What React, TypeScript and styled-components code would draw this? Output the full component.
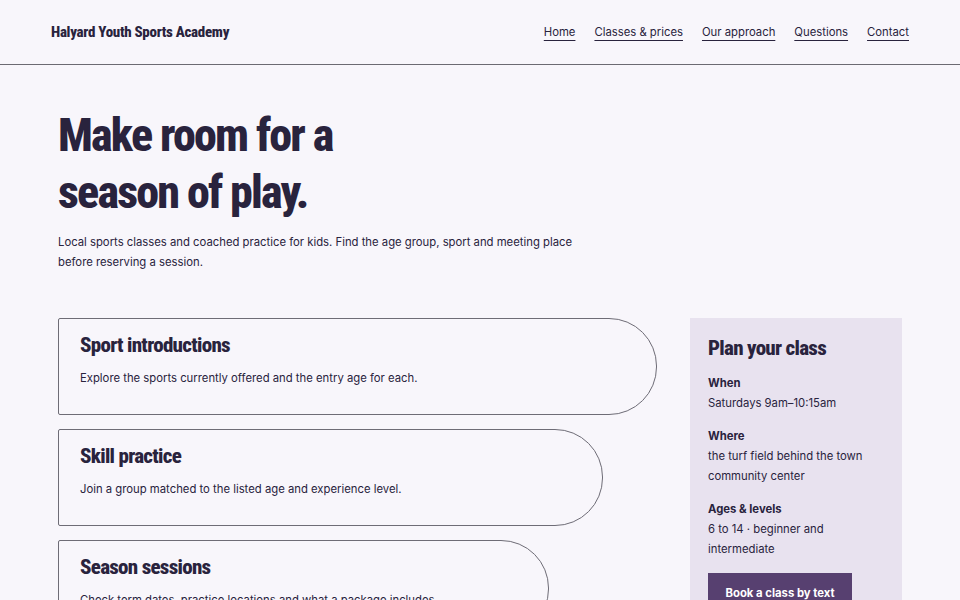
import * as React from "react";
import styled, { createGlobalStyle } from "styled-components";

const ink = "#29233d";
const display = `"Roboto", "Open Sans", sans-serif`;

const GlobalStyle = createGlobalStyle`
  html, body {
    margin: 0;
    padding: 0;
    background: #f8f6fb;
    color: ${ink};
    font-family: "Inter", "Noto Sans", sans-serif;
  }
`;

const offerings = [
  {
    title: "Sport introductions",
    text: "Explore the sports currently offered and the entry age for each.",
    width: 100,
  },
  {
    title: "Skill practice",
    text: "Join a group matched to the listed age and experience level.",
    width: 91,
  },
  {
    title: "Season sessions",
    text: "Check term dates, practice locations and what a package includes.",
    width: 82,
  },
];

const details = [
  { label: "When", value: "Saturdays 9am–10:15am" },
  { label: "Where", value: "the turf field behind the town community center" },
  { label: "Ages & levels", value: "6 to 14 · beginner and intermediate" },
];

const navLinks = ["Home", "Classes & prices", "Our approach", "Questions", "Contact"];

export default function App() {
  return (
    <>
      <GlobalStyle />
      <Header>
        <Brand>Halyard Youth Sports Academy</Brand>
        <Nav>
          {navLinks.map((l) => (
            <NavLink key={l} href="#">
              {l}
            </NavLink>
          ))}
        </Nav>
      </Header>
      <Main>
        <Hero>
          <Headline>
            Make room for a
            <br />
            season of play.
          </Headline>
          <Lede>
            Local sports classes and coached practice for kids. Find the age
            group, sport and meeting place before reserving a session.
          </Lede>
        </Hero>
        <Columns>
          <CardList>
            {offerings.map((o) => (
              <Card key={o.title} $width={o.width}>
                <CardTitle>{o.title}</CardTitle>
                <CardText>{o.text}</CardText>
              </Card>
            ))}
          </CardList>
          <Aside>
            <AsideTitle>Plan your class</AsideTitle>
            {details.map((d) => (
              <Detail key={d.label}>
                <DetailLabel>{d.label}</DetailLabel>
                <DetailValue>{d.value}</DetailValue>
              </Detail>
            ))}
            <BookButton>Book a class by text</BookButton>
          </Aside>
        </Columns>
      </Main>
    </>
  );
}

const Header = styled.header`
  display: flex;
  align-items: center;
  justify-content: space-between;
  height: 64px;
  padding: 0 51px;
  border-bottom: 1px solid #6c6a72;
`;

const Brand = styled.div`
  font-family: ${display};
  font-stretch: 75%;
  font-weight: 800;
  font-size: 15px;
  letter-spacing: -0.3px;
  color: ${ink};
`;

const Nav = styled.nav`
  display: flex;
  gap: 19px;
`;

const NavLink = styled.a`
  font-size: 11.3px;
  line-height: 16px;
  color: ${ink};
  text-decoration: underline;
  text-underline-offset: 4px;
  text-decoration-thickness: 1px;
`;

const Main = styled.main`
  width: 844px;
  margin: 0 auto;
`;

const Hero = styled.section`
  padding-top: 42px;
`;

const Headline = styled.h1`
  margin: 0;
  font-family: ${display};
  font-stretch: 75%;
  font-weight: 800;
  font-size: 46px;
  line-height: 57px;
  letter-spacing: -1.8px;
  color: ${ink};
`;

const Lede = styled.p`
  margin: 11px 0 0;
  max-width: 520px;
  font-size: 11.3px;
  line-height: 20px;
`;

const Columns = styled.div`
  display: grid;
  grid-template-columns: 599px 212px;
  gap: 33px;
  margin-top: 46px;
  align-items: start;
`;

const CardList = styled.div`
  display: flex;
  flex-direction: column;
  gap: 14px;
`;

const Card = styled.article<{ $width: number }>`
  box-sizing: border-box;
  width: ${(p) => p.$width}%;
  padding: 13px 21px 26px;
  border: 1px solid #6e6c76;
  border-radius: 2px 48px 48px 2px;
`;

const CardTitle = styled.h2`
  margin: 0;
  font-family: ${display};
  font-stretch: 75%;
  font-weight: 800;
  font-size: 21px;
  line-height: 26px;
  letter-spacing: -0.7px;
  color: ${ink};
`;

const CardText = styled.p`
  margin: 10px 0 0;
  font-size: 11.3px;
  line-height: 20px;
`;

const Aside = styled.aside`
  box-sizing: border-box;
  padding: 18px 18px 0;
  height: 290px;
  background: #e8e2ef;
`;

const AsideTitle = styled.h2`
  margin: 0 0 13px;
  font-family: ${display};
  font-stretch: 75%;
  font-weight: 800;
  font-size: 21px;
  line-height: 24px;
  letter-spacing: -0.7px;
  color: ${ink};
`;

const Detail = styled.div`
  margin-bottom: 13px;
`;

const DetailLabel = styled.div`
  font-size: 11.3px;
  font-weight: 700;
  line-height: 20px;
`;

const DetailValue = styled.div`
  font-size: 11.3px;
  line-height: 20px;
`;

const BookButton = styled.button`
  display: block;
  margin-top: 14px;
  padding: 12px 17.5px;
  border: none;
  background: #574070;
  color: #fff;
  font-family: "Inter", sans-serif;
  font-weight: 700;
  font-size: 11.3px;
  line-height: 16px;
`;
